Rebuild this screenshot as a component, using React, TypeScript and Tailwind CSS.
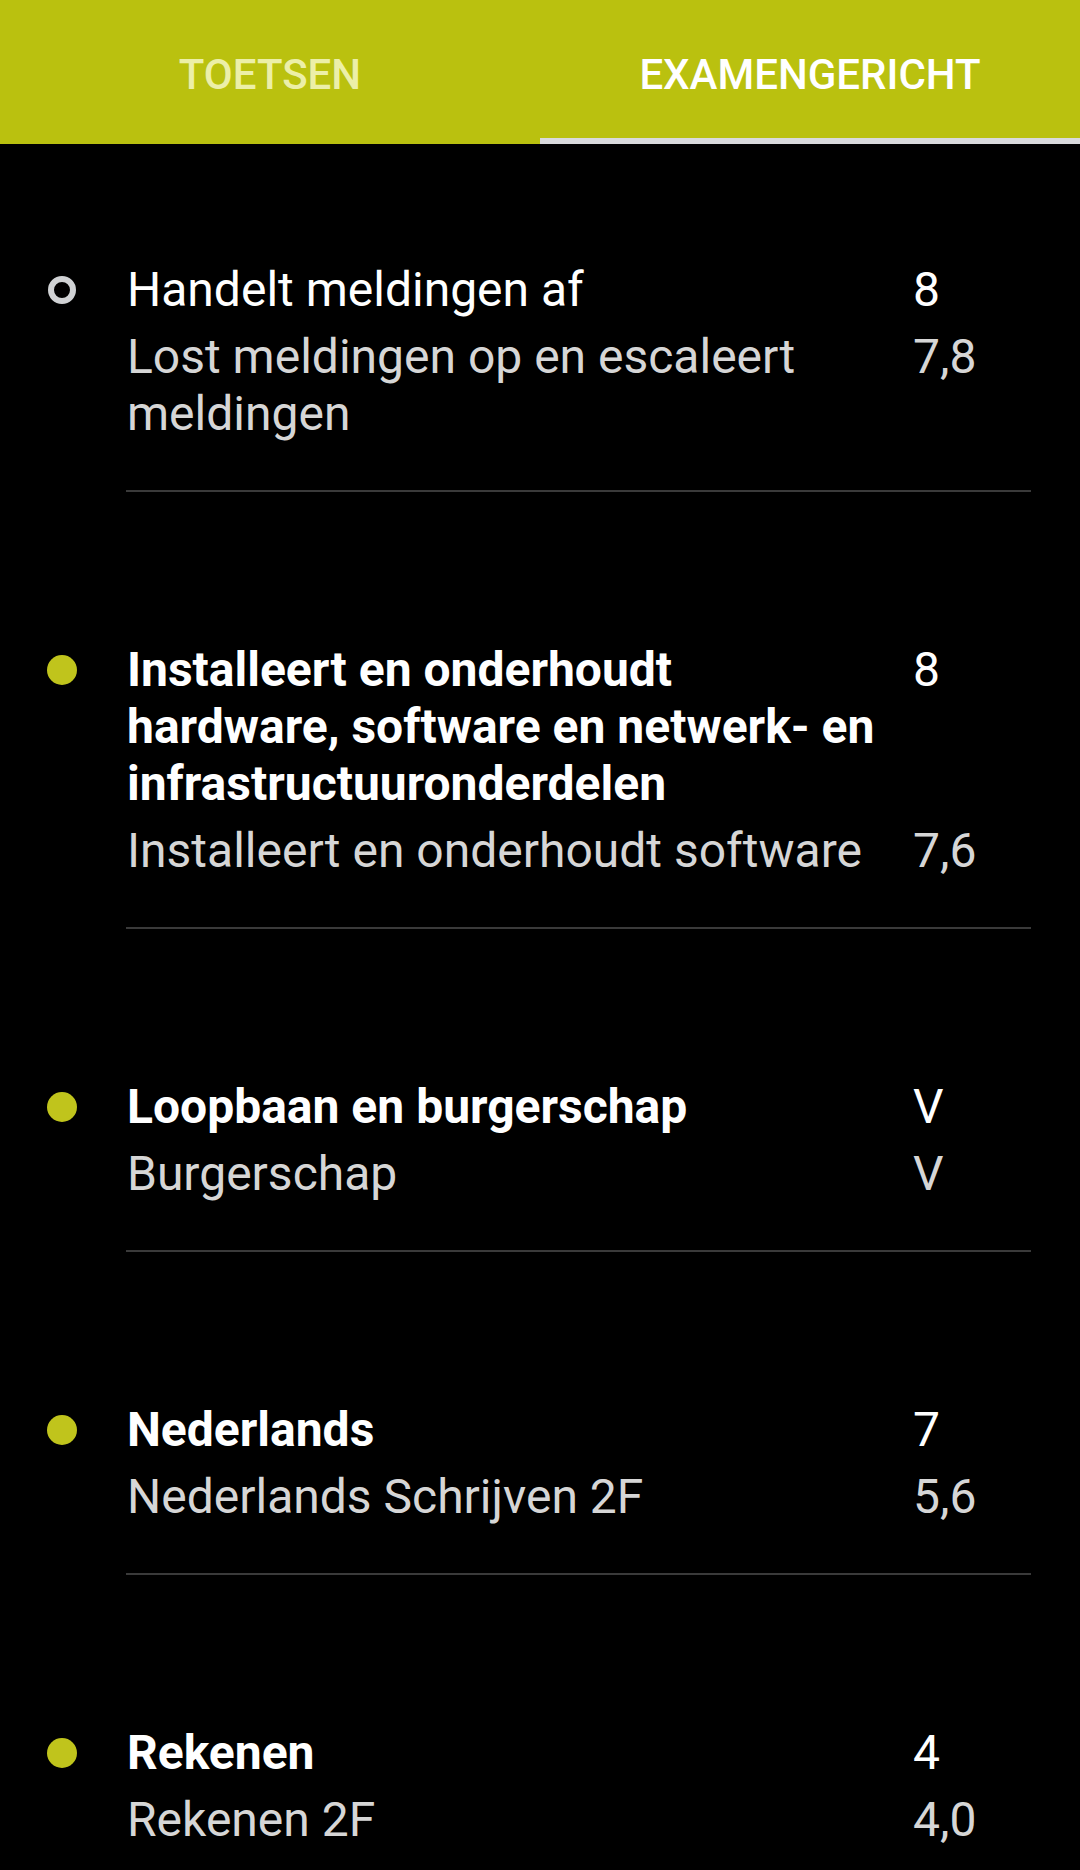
import React from "react";

type Item = {
  title: string;
  value: string;
  sub: string;
  subValue: string;
  done: boolean;
};

const items: Item[] = [
  { title: "Handelt meldingen af", value: "8", sub: "Lost meldingen op en escaleert meldingen", subValue: "7,8", done: false },
  { title: "Installeert en onderhoudt hardware, software en netwerk- en infrastructuuronderdelen", value: "8", sub: "Installeert en onderhoudt software", subValue: "7,6", done: true },
  { title: "Loopbaan en burgerschap", value: "V", sub: "Burgerschap", subValue: "V", done: true },
  { title: "Nederlands", value: "7", sub: "Nederlands Schrijven 2F", subValue: "5,6", done: true },
  { title: "Rekenen", value: "4", sub: "Rekenen 2F", subValue: "4,0", done: true },
];

function Row({ item, first, last }: { item: Item; first: boolean; last: boolean }) {
  return (
    <div className={`flex pl-[47px] pr-[49px] ${first ? "pt-[117px]" : "pt-[149px]"}`}>
      <div className="w-[30px] h-[57px] flex items-center justify-center shrink-0">
        {item.done ? (
          <div className="w-[30px] h-[30px] rounded-full bg-[#c0c41c]" />
        ) : (
          <div className="w-[28px] h-[28px] rounded-full border-[6px] border-[#d0d2d4]" />
        )}
      </div>
      <div className="ml-[50px] flex-1">
        <div className="flex text-white text-[48px] leading-[57px]">
          <div className={`flex-1 pr-[28px] ${item.done ? "font-bold" : "font-normal"}`}>{item.title}</div>
          <div className="w-[118px] shrink-0">{item.value}</div>
        </div>
        <div className="flex mt-[10px] text-[#d6d6d6] text-[48px] leading-[57px]">
          <div className="flex-1 pr-[28px]">{item.sub}</div>
          <div className="w-[118px] shrink-0">{item.subValue}</div>
        </div>
        {!last && <div className="mt-[48px] -ml-[1px] h-[2px] bg-[#3a3a3a]" />}
      </div>
    </div>
  );
}

export default function App() {
  return (
    <div className="w-[1080px] min-h-[1870px] bg-black font-['Roboto',sans-serif] overflow-hidden">
      <div className="h-[144px] bg-[#bac10f] flex">
        <div className="flex-1 flex flex-col">
          <div className="flex-1 flex items-center justify-center pt-[10px] text-[42px] font-medium text-[#ecefa8]">
            TOETSEN
          </div>
          <div className="h-[6px]" />
        </div>
        <div className="flex-1 flex flex-col">
          <div className="flex-1 flex items-center justify-center pt-[10px] text-[42px] font-medium text-white">
            EXAMENGERICHT
          </div>
          <div className="h-[6px] bg-[#d9dadc]" />
        </div>
      </div>
      <div>
        {items.map((it, i) => (
          <Row key={i} item={it} first={i === 0} last={i === items.length - 1} />
        ))}
      </div>
    </div>
  );
}
